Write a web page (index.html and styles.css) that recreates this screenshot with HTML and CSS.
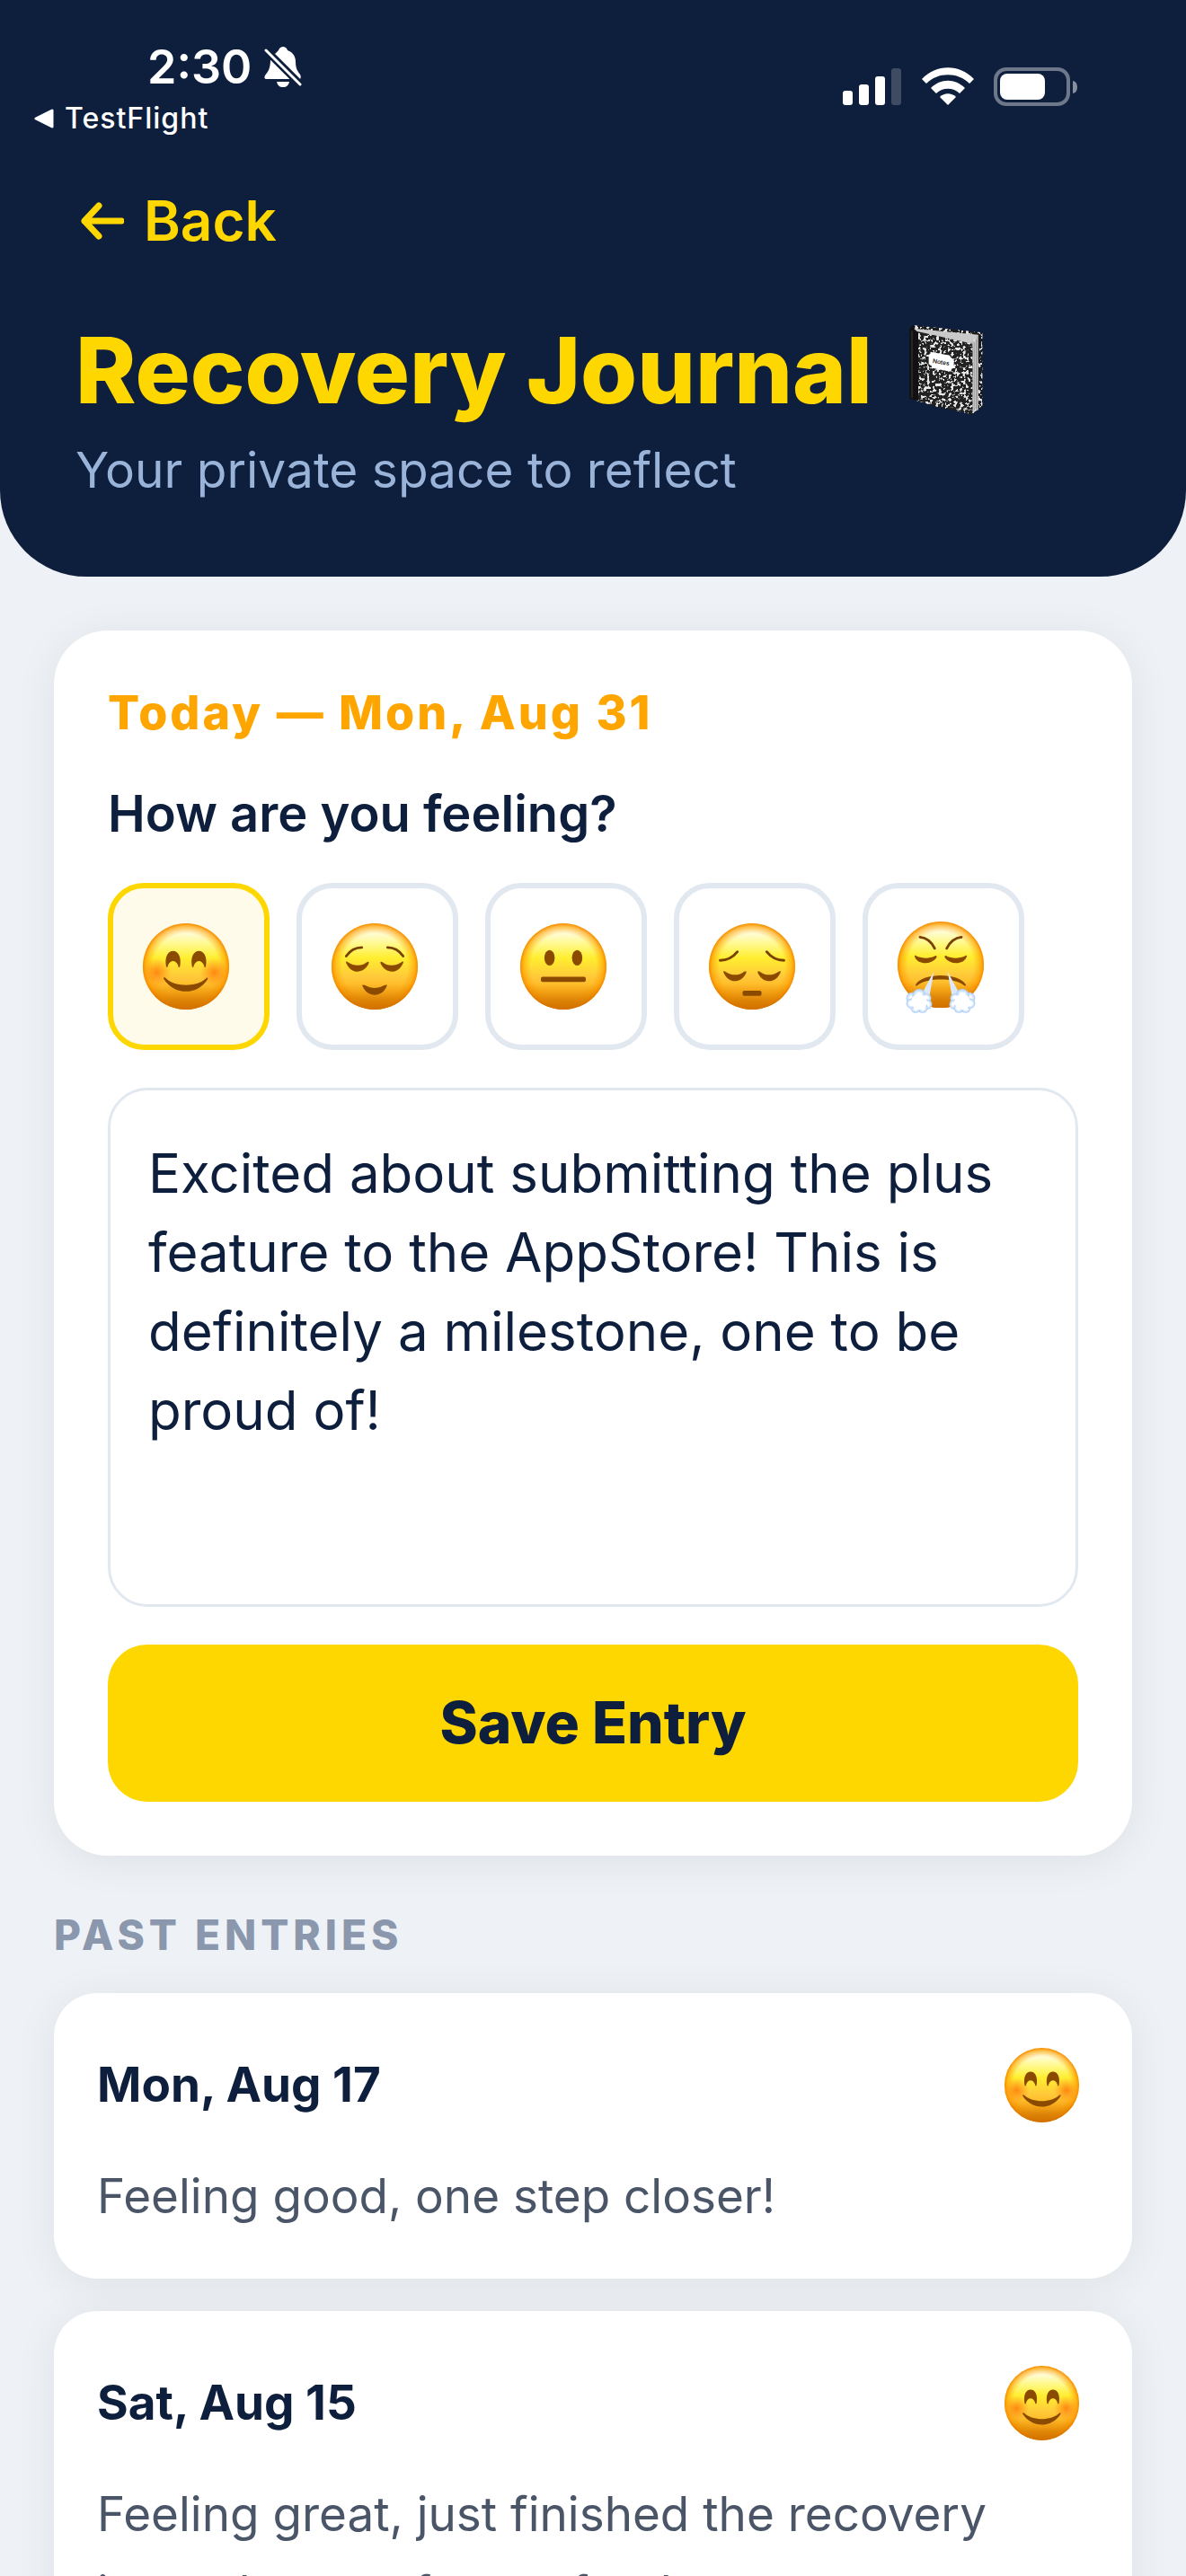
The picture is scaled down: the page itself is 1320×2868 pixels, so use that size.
FILE: index.html
```html
<!DOCTYPE html>
<html lang="en">
<head>
    <meta charset="UTF-8">
    <meta name="viewport" content="width=device-width, initial-scale=1">
    <title>Recovery Journal</title>
    <link rel="stylesheet" href="styles.css">
</head>
<body>
<!-- shared emoji shapes -->
<svg class="defs" aria-hidden="true">
    <defs>
        <linearGradient id="skin" x1="0" y1="0" x2="0" y2="1">
            <stop offset="0" stop-color="#fff6b0"/>
            <stop offset="0.1" stop-color="#fffde0"/>
            <stop offset="0.24" stop-color="#fff98c"/>
            <stop offset="0.4" stop-color="#ffee30"/>
            <stop offset="0.62" stop-color="#ffc93a"/>
            <stop offset="0.82" stop-color="#ffae16"/>
            <stop offset="1" stop-color="#e08200"/>
        </linearGradient>
        <radialGradient id="rim" cx="50%" cy="50%" r="50%">
            <stop offset="0.76" stop-color="#ffa000" stop-opacity="0"/>
            <stop offset="0.92" stop-color="#ff9c00" stop-opacity="0.6"/>
            <stop offset="1" stop-color="#f58a00"/>
        </radialGradient>
        <linearGradient id="shade" x1="0" y1="0" x2="0" y2="1">
            <stop offset="0.7" stop-color="#b85c00" stop-opacity="0"/>
            <stop offset="1" stop-color="#b85c00" stop-opacity="0.6"/>
        </linearGradient>
        <radialGradient id="blush">
            <stop offset="0" stop-color="#ff7a0a" stop-opacity="0.85"/>
            <stop offset="1" stop-color="#ff8a10" stop-opacity="0"/>
        </radialGradient>
        <radialGradient id="puff">
            <stop offset="0.4" stop-color="#ffffff"/>
            <stop offset="1" stop-color="#a9cbf8"/>
        </radialGradient>
        <linearGradient id="pages" x1="0" y1="0" x2="1" y2="0">
            <stop offset="0" stop-color="#8c8c8c"/>
            <stop offset="0.5" stop-color="#e6e6e6"/>
            <stop offset="1" stop-color="#9a9a9a"/>
        </linearGradient>
        <filter id="marble" x="0" y="0" width="1" height="1">
            <feTurbulence type="fractalNoise" baseFrequency="0.1" numOctaves="2" seed="4"/>
            <feColorMatrix values="0 0 0 0 0.8  0 0 0 0 0.8  0 0 0 0 0.8  12 0 0 0 -6.4"/>
            <feComposite in2="SourceGraphic" operator="in" result="dots"/>
            <feMerge>
                <feMergeNode in="SourceGraphic"/>
                <feMergeNode in="dots"/>
            </feMerge>
        </filter>

        <g id="head">
            <circle cx="50" cy="50" r="50" fill="url(#skin)"/>
            <circle cx="50" cy="50" r="50" fill="url(#rim)"/>
            <circle cx="50" cy="50" r="50" fill="url(#shade)"/>
        </g>
        <symbol id="happy" viewBox="0 0 100 100">
            <use href="#head"/>
            <circle cx="16" cy="57" r="17" fill="url(#blush)"/>
            <circle cx="83" cy="57" r="17" fill="url(#blush)"/>
            <g fill="#8a4b00">
                <path d="M27 50C25 39 29 32 35 32S45 39 43 50C42 52 41 51 41 49C38 42 32 42 29 49C29 51 28 52 27 50Z"/>
                <path d="M57 50C55 39 59 32 65 32S75 39 73 50C72 52 71 51 71 49C68 42 62 42 59 49C59 51 58 52 57 50Z"/>
                <path d="M24 64C24 62 26 63 27 64C38 74 62 74 73 64C74 63 76 62 75 65C69 74 60 79 50 79S30 74 24 64Z"/>
            </g>
        </symbol>
        <symbol id="calm" viewBox="0 0 100 100">
            <use href="#head"/>
            <g fill="#8a4b00">
                <path d="M17 46C16 44 18 44 19 45C26 50 35 50 41 45C43 44 44 45 43 47C40 53 35 56 30 56S20 53 17 46Z"/>
                <path d="M83 46C84 44 82 44 81 45C74 50 65 50 59 45C57 44 56 45 57 47C60 53 65 56 70 56S80 53 83 46Z"/>
                <path d="M36 73C35 71 37 71 39 72C46 76 54 76 61 72C63 71 65 71 64 73C61 80 56 83 50 83S39 80 36 73Z"/>
            </g>
            <g fill="none" stroke="#7a4000" stroke-width="3" stroke-linecap="round">
                <path d="M17 38Q24 28 35 28"/>
                <path d="M83 38Q76 28 65 28"/>
            </g>
        </symbol>
        <symbol id="neutral" viewBox="0 0 100 100">
            <use href="#head"/>
            <g fill="#8a4b00">
                <ellipse cx="34" cy="40" rx="6" ry="9"/>
                <ellipse cx="66" cy="40" rx="6" ry="9"/>
                <rect x="24" y="62" width="52" height="6" rx="2"/>
            </g>
        </symbol>
        <symbol id="sad" viewBox="0 0 100 100">
            <use href="#head"/>
            <g fill="#8a4b00">
                <path d="M17 57C16 55 18 55 19 56C26 61 35 61 41 56C43 55 44 55 43 58C40 64 35 67 30 67S20 64 17 57Z"/>
                <path d="M83 57C84 55 82 55 81 56C74 61 65 61 59 56C57 55 56 55 57 58C60 64 65 67 70 67S80 64 83 57Z"/>
                <rect x="39" y="78" width="22" height="6" rx="2"/>
            </g>
            <g fill="none" stroke="#7a4000" stroke-width="3" stroke-linecap="round">
                <path d="M13 43Q25 43 33 33"/>
                <path d="M87 43Q75 43 67 33"/>
            </g>
        </symbol>
        <g id="cloud" fill="url(#puff)">
            <circle cx="17" cy="87" r="7"/>
            <circle cx="25" cy="84" r="8"/>
            <circle cx="33" cy="87" r="6"/>
            <circle cx="34" cy="94" r="6"/>
            <circle cx="29" cy="98" r="6"/>
            <circle cx="21" cy="98" r="6"/>
            <circle cx="16" cy="93" r="6"/>
            <circle cx="25" cy="91" r="9" fill="#fff"/>
        </g>
        <symbol id="huff" viewBox="0 0 100 100" overflow="visible">
            <use href="#head" y="-2"/>
            <g fill="#8a4b00">
                <path d="M20 39C19 37 21 37 22 38C29 41 37 41 43 38C45 37 46 38 45 40C42 44 37 46 32 46S22 44 20 39Z"/>
                <path d="M80 39C81 37 79 37 78 38C71 41 63 41 57 38C55 37 54 38 55 40C58 44 63 46 68 46S78 44 80 39Z"/>
                <path d="M21 71C29 57 71 57 79 71C80 73 78 73 76 71C65 63 35 63 24 71C22 73 20 73 21 71Z"/>
            </g>
            <g fill="none" stroke="#7a4000" stroke-width="3" stroke-linecap="round">
                <path d="M26 16Q37 17 43 29"/>
                <path d="M74 16Q63 17 57 29"/>
            </g>
            <path d="M42 56L28 82L37 84Z" fill="#dbe9fd"/>
            <path d="M58 56L72 82L63 84Z" fill="#dbe9fd"/>
            <use href="#cloud"/>
            <use href="#cloud" transform="translate(100 0) scale(-1 1)"/>
        </symbol>
    </defs>
</svg>

<div class="screen">
    <header class="header">
        <div class="status">
            <div class="status-left">
                <div class="clock">
                    <span>2:30</span>
                    <svg class="bell" viewBox="0 0 42 46" aria-hidden="true">
                        <g fill="#fff">
                            <path d="M12 8C14 6 15 5 16 4C17 1 19 0 21 0S25 1 26 4C32 6 35 11 35 17C35 25 38 28 40 31C41 33 41 34 40 36Z"/>
                            <path d="M7 14L29 36H3C0 36 0 34 1 32C4 28 7 25 7 14Z"/>
                            <path d="M14 39H28C27 43 25 45 21 45S15 43 14 39Z"/>
                        </g>
                        <path d="M2 4L40 42" stroke="#0e1f3d" stroke-width="8"/>
                        <path d="M2 4L40 42" stroke="#fff" stroke-width="3" stroke-linecap="round"/>
                    </svg>
                </div>
                <a class="return" href="#">
                    <svg class="tri" viewBox="0 0 22 22" aria-hidden="true"><path d="M2 11L20 2V20Z" fill="#fff" stroke="#fff" stroke-width="3" stroke-linejoin="round"/></svg>
                    TestFlight
                </a>
            </div>
            <div class="status-right">
                <svg class="signal" viewBox="0 0 66 42" aria-hidden="true">
                    <g fill="#fff">
                        <rect x="0" y="26" width="11" height="16" rx="3"/>
                        <rect x="18" y="19" width="11" height="23" rx="3"/>
                        <rect x="36" y="10" width="11" height="32" rx="3"/>
                        <rect x="54" y="1" width="11" height="41" rx="3" opacity="0.2"/>
                    </g>
                </svg>
                <svg class="wifi" viewBox="0 0 58 42" aria-hidden="true">
                    <g fill="#fff">
                        <path d="M0 13C16 -4 42 -4 58 13L53 18C40 5 18 5 5 18Z"/>
                        <path d="M10 23C21 12 37 12 48 23L42 29C35 22 23 22 16 29Z"/>
                        <path d="M20 33C25 28 33 28 38 33L29 42Z"/>
                    </g>
                </svg>
                <svg class="battery" viewBox="0 0 94 43" aria-hidden="true">
                    <rect x="2" y="2" width="81" height="39" rx="12" fill="none" stroke="#fff" stroke-width="4" opacity="0.4"/>
                    <rect x="7" y="7" width="50" height="29" rx="8" fill="#fff"/>
                    <path d="M88 15Q93 16 93 22T88 29Z" fill="#fff" opacity="0.5"/>
                </svg>
            </div>
        </div>
        <a class="back" href="#">
            <svg class="arrow" viewBox="0 0 48 42" aria-hidden="true"><path d="M45 21H4M20 4L4 21L20 38" fill="none" stroke="#ffd700" stroke-width="7" stroke-linecap="round" stroke-linejoin="round"/></svg>
            Back
        </a>
        <h1 class="title">
            Recovery Journal
            <svg class="book" viewBox="88 62 252 306" aria-hidden="true">
                <path d="M108 66L335 90V337L300 363L150 330Z" fill="#1d1d1d" filter="url(#marble)"/>
                <path d="M106 76L322 97L322 346L302 358L296 128L118 88Z" fill="#c9c9c9"/>
                <path d="M296 126L322 97V346L302 358Z" fill="url(#pages)"/>
                <path d="M302 128V352M308 120V350M314 112V346" stroke="#777" stroke-width="2"/>
                <path d="M118 86L296 126Q302 128 302 134V363L116 318Z" fill="#242424" filter="url(#marble)"/>
                <path d="M92 78Q96 64 110 68L106 78L121 90V318L92 310Z" fill="#111"/>
                <path d="M100 84V308" stroke="#3c3c3c" stroke-width="3"/>
                <path d="M162 154L226 166Q228 174 240 180V208Q230 210 228 220L168 208Q166 198 156 194V166Q162 164 162 154Z" fill="#fff"/>
                <text x="168" y="191" transform="rotate(9 168 191)" class="book-label">Notes</text>
            </svg>
        </h1>
        <p class="subtitle">Your private space to reflect</p>
    </header>

    <main class="content">
        <form class="card today">
            <h2 class="date">Today — Mon, Aug 31</h2>
            <p class="question">How are you feeling?</p>
            <div class="moods">
                <button type="button" class="mood selected" aria-label="Happy"><svg class="face"><use href="#happy"/></svg></button>
                <button type="button" class="mood" aria-label="Relieved"><svg class="face"><use href="#calm"/></svg></button>
                <button type="button" class="mood" aria-label="Neutral"><svg class="face"><use href="#neutral"/></svg></button>
                <button type="button" class="mood" aria-label="Sad"><svg class="face"><use href="#sad"/></svg></button>
                <button type="button" class="mood" aria-label="Frustrated"><svg class="face"><use href="#huff"/></svg></button>
            </div>
            <textarea class="note" aria-label="Journal entry" spellcheck="false">Excited about submitting the plus feature to the AppStore! This is definitely a milestone, one to be proud of!</textarea>
            <button type="submit" class="save">Save Entry</button>
        </form>

        <h2 class="section">PAST ENTRIES</h2>
        <article class="card entry">
            <div class="entry-head">
                <h3 class="entry-date">Mon, Aug 17</h3>
                <svg class="face small"><use href="#happy"/></svg>
            </div>
            <p class="entry-text">Feeling good, one step closer!</p>
        </article>
        <article class="card entry">
            <div class="entry-head">
                <h3 class="entry-date">Sat, Aug 15</h3>
                <svg class="face small"><use href="#happy"/></svg>
            </div>
            <p class="entry-text">Feeling great, just finished the recovery journal space for my feed.</p>
        </article>
    </main>
</div>
</body>
</html>
```

FILE: styles.css
```css
* {
    margin: 0;
    padding: 0;
    box-sizing: border-box;
}
body {
    background-color: #eef2f7;
    color: #0d1f3d;
    font-family: Inter, "Liberation Sans", sans-serif;
}
a {
    text-decoration: none;
}
svg {
    display: block;
    flex-shrink: 0;
}
.defs {
    position: absolute;
    width: 0;
    height: 0;
}
.screen {
    height: 100vh;
    overflow: hidden;
}

/* header */
.header {
    background-color: #0e1f3d;
    border-radius: 0 0 96px 96px;
    padding: 43px 84px 84px;
}
.status {
    display: flex;
    justify-content: space-between;
    margin: 0 36px 54px -46px;
    color: #fff;
}
.clock {
    display: flex;
    align-items: center;
    gap: 14px;
    padding-left: 126px;
    font-size: 52px;
    font-weight: 600;
    line-height: 64px;
}
.bell {
    width: 42px;
    height: 46px;
}
.return {
    display: flex;
    align-items: center;
    gap: 12px;
    margin-top: 5px;
    color: #fff;
    font-size: 32px;
    font-weight: 500;
    line-height: 40px;
    letter-spacing: 1px;
}
.tri {
    width: 22px;
    height: 22px;
}
.status-right {
    display: flex;
    align-items: flex-start;
    gap: 22px;
    padding-top: 32px;
}
.signal {
    width: 66px;
    height: 42px;
}
.wifi {
    width: 58px;
    height: 42px;
}
.battery {
    width: 94px;
    height: 43px;
}
.back {
    display: flex;
    align-items: center;
    gap: 22px;
    padding-left: 6px;
    color: #ffd700;
    font-size: 62px;
    font-weight: 600;
    line-height: 80px;
}
.arrow {
    width: 48px;
    height: 42px;
}
.title {
    display: flex;
    align-items: center;
    gap: 40px;
    margin-top: 66px;
    color: #ffd700;
    font-size: 102px;
    font-weight: 800;
    line-height: 120px;
}
.book {
    width: 84px;
    height: 102px;
}
.book-label {
    font-size: 20px;
    font-weight: 500;
}
.subtitle {
    margin-top: 16px;
    color: #9ab3d9;
    font-size: 55px;
    line-height: 70px;
}

/* cards */
.content {
    padding: 60px;
}
.card {
    background-color: #fff;
    box-shadow: 0 6px 48px rgba(0, 0, 0, 0.07);
}
.today {
    border-radius: 60px;
    padding: 60px;
}
.date {
    color: #ffa500;
    font-size: 52px;
    font-weight: 800;
    line-height: 64px;
    letter-spacing: 3px;
}
.question {
    margin-top: 44px;
    font-size: 56px;
    font-weight: 600;
    line-height: 72px;
}
.moods {
    display: flex;
    gap: 30px;
    margin: 41px 0 42px;
}
.mood {
    background-color: #fff;
    border: 6px solid #e2e8f0;
    border-radius: 40px;
    padding: 39px 39px 39px 33px;
}
.mood.selected {
    background-color: #fffbea;
    border-color: #ffd700;
}
.face {
    width: 96px;
    height: 96px;
    overflow: visible;
}
.note {
    display: block;
    width: 100%;
    height: 578px;
    background-color: #fff;
    border: 3px solid #e2e8f0;
    border-radius: 44px;
    padding: 48px 42px;
    color: #0d1f3d;
    font-family: inherit;
    font-size: 60px;
    line-height: 88px;
    resize: none;
    overflow: hidden;
}
.save {
    display: block;
    width: 100%;
    margin-top: 42px;
    padding: 47px 0 48px;
    background-color: #ffd700;
    border: 0;
    border-radius: 44px;
    color: #0d1f3d;
    font-family: inherit;
    font-size: 64px;
    font-weight: 800;
    line-height: 80px;
}

/* past entries */
.section {
    margin: 60px 0 37px;
    color: #8a97ad;
    font-size: 46px;
    font-weight: 800;
    line-height: 56px;
    letter-spacing: 5px;
}
.entry {
    border-radius: 48px;
    padding: 48px;
    margin-bottom: 36px;
}
.entry-head {
    display: flex;
    justify-content: space-between;
    align-items: center;
    height: 108px;
    margin-bottom: 26px;
    padding-right: 11px;
}
.entry-date {
    font-size: 53px;
    font-weight: 700;
}
.small {
    width: 83px;
    height: 83px;
}
.entry-text {
    color: #4a5568;
    font-size: 53px;
    line-height: 88px;
}
```
